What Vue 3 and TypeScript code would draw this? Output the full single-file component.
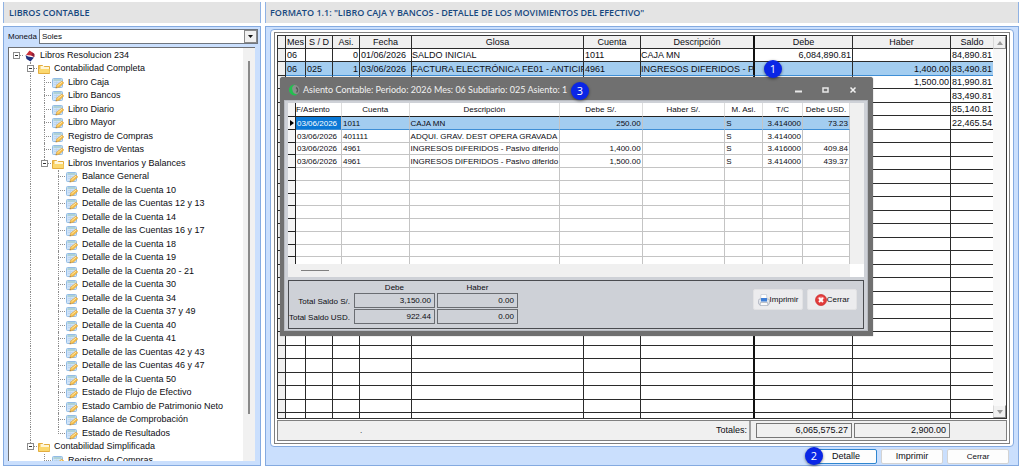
<script setup lang="ts">
import { ref } from 'vue'

type Kind = 'root' | 'folder' | 'leaf'
interface TreeRow {
  level: number
  kind: Kind
  label: string
  last?: boolean
  trunk?: boolean
}

const leaf = (level: number, label: string, last = false): TreeRow => ({ level, kind: 'leaf', label, last, trunk: true })

const tree: TreeRow[] = [
  { level: 0, kind: 'root', label: 'Libros Resolucion 234' },
  { level: 1, kind: 'folder', label: 'Contabilidad Completa' },
  leaf(2, 'Libro Caja'),
  leaf(2, 'Libro Bancos'),
  leaf(2, 'Libro Diario'),
  leaf(2, 'Libro Mayor'),
  leaf(2, 'Registro de Compras'),
  leaf(2, 'Registro de Ventas'),
  { level: 2, kind: 'folder', label: 'Libros Inventarios y Balances', last: true, trunk: true },
  leaf(3, 'Balance General'),
  leaf(3, 'Detalle de la Cuenta 10'),
  leaf(3, 'Detalle de las Cuentas 12 y 13'),
  leaf(3, 'Detalle de la Cuenta 14'),
  leaf(3, 'Detalle de las Cuentas 16 y 17'),
  leaf(3, 'Detalle de la Cuenta 18'),
  leaf(3, 'Detalle de la Cuenta 19'),
  leaf(3, 'Detalle de la Cuenta 20 - 21'),
  leaf(3, 'Detalle de la Cuenta 30'),
  leaf(3, 'Detalle de la Cuenta 34'),
  leaf(3, 'Detalle de la Cuenta 37 y 49'),
  leaf(3, 'Detalle de la Cuenta 40'),
  leaf(3, 'Detalle de la Cuenta 41'),
  leaf(3, 'Detalle de las Cuentas 42 y 43'),
  leaf(3, 'Detalle de las Cuentas 46 y 47'),
  leaf(3, 'Detalle de la Cuenta 50'),
  leaf(3, 'Estado de Flujo de Efectivo'),
  leaf(3, 'Estado Cambio de Patrimonio Neto'),
  leaf(3, 'Balance de Comprobación'),
  leaf(3, 'Estado de Resultados', true),
  { level: 1, kind: 'folder', label: 'Contabilidad Simplificada', last: true },
  { level: 2, kind: 'leaf', label: 'Registro de Compras' },
]

const moneda = ref('Soles')

const bookHeads = ['Mes', 'S / D', 'Asi.', 'Fecha', 'Glosa', 'Cuenta', 'Descripción', 'Debe', 'Haber', 'Saldo']
const bookCols = ['mes', 'sd', 'asi', 'fecha', 'glosa', 'cuenta', 'desc', 'debe', 'haber', 'saldo']
const blank = (n: number) => Array.from({ length: n }, () => '')
const bookRows: string[][] = [
  ['06', '', '0', '01/06/2026', 'SALDO INICIAL', '1011', 'CAJA MN', '6,084,890.81', '', '84,890.81'],
  ['06', '025', '1', '03/06/2026', 'FACTURA ELECTRÓNICA FE01 - ANTICIP', '4961', 'INGRESOS DIFERIDOS - P', '', '1,400.00', '83,490.81'],
  [...blank(8), '1,500.00', '81,990.81'],
  [...blank(9), '83,490.81'],
  [...blank(9), '85,140.81'],
  [...blank(9), '22,465.54'],
  ...Array.from({ length: 22 }, () => blank(10)),
]

const entryHeads = ['F/Asiento', 'Cuenta', 'Descripción', 'Debe S/.', 'Haber S/.', 'M. Asi.', 'T/C', 'Debe USD.']
const entryCols = ['e-fecha', 'e-cuenta', 'e-desc', 'e-debe num', 'e-haber num', 'e-mon', 'e-tc num', 'e-usd num']
const entryRows: string[][] = [
  ['03/06/2026', '1011', 'CAJA MN', '250.00', '', 'S', '3.414000', '73.23'],
  ['03/06/2026', '401111', 'ADQUI. GRAV. DEST OPERA GRAVADA', '', '', 'S', '3.414000', ''],
  ['03/06/2026', '4961', 'INGRESOS DIFERIDOS - Pasivo diferido', '1,400.00', '', 'S', '3.416000', '409.84'],
  ['03/06/2026', '4961', 'INGRESOS DIFERIDOS - Pasivo diferido', '1,500.00', '', 'S', '3.414000', '439.37'],
  ...Array.from({ length: 8 }, () => blank(8)),
]
</script>

<template>
  <div class="app">
    <section class="side">
      <h2 class="bar">LIBROS CONTABLE</h2>
      <div class="panel side-panel">
        <div class="currency">
          <label for="moneda">Moneda</label>
          <div class="combo">
            <select id="moneda" v-model="moneda">
              <option>Soles</option>
            </select>
            <span class="combo-arrow"><svg width="5" height="3" viewBox="0 0 5 3"><path d="M0 0h5L2.500 3z" fill="#111" /></svg></span>
          </div>
        </div>
        <div class="tree-box">
          <ul class="tree">
            <li v-for="(row, i) in tree" :key="i">
              <span v-for="n in row.level" :key="n" class="guide" :class="{ line: n === 2 && row.trunk }"></span>
              <span class="joint" :class="{ last: row.last, first: row.level === 0 }">
                <button v-if="row.kind !== 'leaf'" class="toggle" :aria-label="'Contraer ' + row.label"></button>
              </span>
              <span class="icon">
                <svg v-if="row.kind === 'root'" width="12" height="12" viewBox="0 0 12 12">
                  <path d="M5.500 .5L10 3.500V7L7 5.500 2 5z" fill="#c9303a" />
                  <path d="M8 2.500l2.500 1.500V7L7.500 5.300z" fill="#8e1f3a" />
                  <path d="M1.500 5L4 6.500l6 1L6.500 11.500 2.500 9z" fill="#1d2f7d" />
                </svg>
                <svg v-else-if="row.kind === 'folder'" width="12" height="10" viewBox="0 0 12 10">
                  <path d="M.5 1.500h4l1 1h6v7h-11z" fill="#f2c04a" stroke="#e3ad3e" />
                  <path d="M2.500 2h3l1 1H11v2H2.500z" fill="#fff6d8" />
                  <path d="M1 5h10.500v4H1z" fill="#fbd86f" />
                </svg>
                <svg v-else width="12" height="12" viewBox="0 0 12 12">
                  <rect x=".5" y="1.500" width="10" height="9" rx="1" fill="#cfe3f8" stroke="#93bce6" />
                  <path d="M1.500 2.500h8v1h-8z" fill="#8fc0b4" />
                  <path d="M2 5.500h5M2 7.500h3M4.500 4.500v4" stroke="#b4d0ec" stroke-width=".7" />
                  <path d="M4 11l.7-3L10 4l1.800 2-4.500 4.300z" fill="#f5bd48" stroke="#d99a38" stroke-width=".5" />
                  <path d="M5.500 8.800l4.700-3.800" stroke="#ffe9a8" />
                  <path d="M3.500 11.300l1.200-.3-.6-.8z" fill="#6b4a1e" />
                </svg>
              </span>
              <span class="name">{{ row.label }}</span>
            </li>
          </ul>
          <div class="tree-scroll"><span></span></div>
        </div>
      </div>
    </section>

    <main class="main">
      <h2 class="bar">FORMATO 1.1: "LIBRO CAJA Y BANCOS - DETALLE DE LOS MOVIMIENTOS DEL EFECTIVO"</h2>
      <div class="panel main-panel">
        <div class="card">
          <div class="frame">
            <div class="book">
              <div class="book-view">
                <table class="book-table">
                  <colgroup>
                    <col class="w-mark" />
                    <col v-for="c in bookCols" :key="c" :class="'w-' + c" />
                  </colgroup>
                  <thead>
                    <tr>
                      <th class="mark"></th>
                      <th v-for="(h, i) in bookHeads" :key="h" :class="bookCols[i]">{{ h }}</th>
                    </tr>
                  </thead>
                  <tbody>
                    <tr v-for="(r, i) in bookRows" :key="i" :class="{ selected: i === 1 }">
                      <td class="mark"></td>
                      <td v-for="(c, j) in r" :key="j" :class="bookCols[j]">{{ c }}</td>
                    </tr>
                  </tbody>
                </table>
              </div>
              <div class="book-scroll">
                <button aria-label="Subir"><svg width="6" height="4" viewBox="0 0 6 4"><path d="M0 4h6L3 0z" fill="#999" /></svg></button>
                <button aria-label="Bajar"><svg width="6" height="4" viewBox="0 0 6 4"><path d="M0 0h6L3 4z" fill="#999" /></svg></button>
              </div>
            </div>
            <div class="totals">
              <span class="dot">.</span>
              <span class="totals-label">Totales:</span>
              <output class="sum">6,065,575.27</output>
              <output class="sum">2,900.00</output>
            </div>
          </div>
        </div>
        <div class="actions">
          <button class="action focus">Detalle<span class="badge b2">2</span></button>
          <button class="action">Imprimir</button>
          <button class="action small">Cerrar</button>
        </div>

        <span class="badge b1">1</span>

        <section class="dialog" role="dialog" aria-labelledby="dlg-title">
          <header class="dlg-head">
            <svg width="12" height="12" viewBox="0 0 12 12">
              <circle cx="6.500" cy="6" r="5" fill="#8b8f8d" />
              <path d="M7.500.5A5.500 5.500 0 1 0 9.500 10.500 4.500 4.500 0 0 1 4.500 6 4 4 0 0 1 7.500.5z" fill="#22c04f" />
              <path d="M8 3.500A3 3 0 0 1 8.500 8.500" stroke="#565b59" stroke-width="1.500" fill="none" />
            </svg>
            <h3 id="dlg-title">Asiento Contable: Periodo: 2026 Mes: 06 Subdiario: 025 Asiento: 1</h3>
            <span class="badge b3">3</span>
            <div class="win">
              <button aria-label="Minimizar"><svg width="8" height="8" viewBox="0 0 8 8"><path d="M0 5.500h7" stroke="#e8e8e8" stroke-width="2" /></svg></button>
              <button aria-label="Maximizar"><svg width="8" height="8" viewBox="0 0 8 8"><rect x="1" y="2" width="5" height="4" fill="none" stroke="#e8e8e8" stroke-width="1.500" /></svg></button>
              <button aria-label="Cerrar ventana"><svg width="8" height="8" viewBox="0 0 8 8"><path d="M1.500 1.500l5 5M6.500 1.500l-5 5" stroke="#f2f2f2" stroke-width="1.500" /></svg></button>
            </div>
          </header>
          <div class="dlg-body">
            <div class="entry">
              <div class="entry-view">
                <table class="entry-table">
                  <colgroup>
                    <col class="w-mark" />
                    <col v-for="c in entryCols" :key="c" :class="'w-' + c.split(' ')[0]" />
                  </colgroup>
                  <thead>
                    <tr>
                      <th class="mark"></th>
                      <th v-for="(h, i) in entryHeads" :key="h" :class="entryCols[i].split(' ')[0]">{{ h }}</th>
                    </tr>
                  </thead>
                  <tbody>
                    <tr v-for="(r, i) in entryRows" :key="i" :class="{ selected: i === 0 }">
                      <td class="mark"><svg v-if="i === 0" width="4" height="6" viewBox="0 0 4 6"><path d="M0 0l4 3-4 3z" fill="#000" /></svg></td>
                      <td v-for="(c, j) in r" :key="j" :class="entryCols[j]">{{ c }}</td>
                    </tr>
                  </tbody>
                </table>
                <div class="entry-vscroll"></div>
              </div>
              <div class="entry-hscroll"><span></span></div>
            </div>
            <div class="summary">
              <table class="sum-table">
                <thead>
                  <tr><td></td><th>Debe</th><th>Haber</th></tr>
                </thead>
                <tbody>
                  <tr><th>Total Saldo S/.</th><td><output>3,150.00</output></td><td><output>0.00</output></td></tr>
                  <tr><th>Total Saldo USD.</th><td><output>922.44</output></td><td><output>0.00</output></td></tr>
                </tbody>
              </table>
              <div class="dlg-actions">
                <button>
                  <svg width="12" height="12" viewBox="0 0 12 12">
                    <path d="M3 .5h5.500l.5 5H2.500z" fill="#fff" stroke="#c3cad4" stroke-width=".7" />
                    <rect x=".5" y="5" width="11" height="5.500" rx="1.500" fill="#e2e6ec" stroke="#a3abb8" stroke-width=".7" />
                    <path d="M3 4h6v3.500H3z" fill="#3f7fd6" />
                    <path d="M2.500 8.500h7l.5 3H2z" fill="#fafafa" stroke="#9aa3b0" stroke-width=".6" />
                  </svg>
                  Imprimir
                </button>
                <button>
                  <svg width="12" height="12" viewBox="0 0 12 12">
                    <circle cx="6" cy="6" r="5.500" fill="#e23b3b" stroke="#c92a2a" stroke-width=".7" />
                    <path d="M2 4.500a4.500 3.500 0 0 1 8 0z" fill="#f28080" />
                    <path d="M4 4l4 4M8 4L4 8" stroke="#fff" stroke-width="2" />
                  </svg>
                  Cerrar
                </button>
              </div>
            </div>
          </div>
        </section>
      </div>
    </main>
  </div>
</template>

<style>
body {
  margin: 0;
  background: #fff;
}
</style>

<style scoped>
* {
  box-sizing: border-box;
}
.app {
  display: grid;
  grid-template-columns: 258px minmax(0, 1fr);
  column-gap: 4px;
  height: 100vh;
  padding: 2px 5px 1px 3px;
  overflow: hidden;
  font: 9px/12px "Liberation Sans", Arial, sans-serif;
  color: #0c0c12;
}
button,
select {
  font: inherit;
  color: inherit;
  padding: 0;
  margin: 0;
}
h2,
h3,
ul {
  margin: 0;
  padding: 0;
}
svg {
  display: block;
  flex: none;
}
.side,
.main {
  display: flex;
  flex-direction: column;
  gap: 3px;
  min-width: 0;
  min-height: 0;
}
.bar {
  flex: none;
  height: 21px;
  padding: 0 4px;
  background: #e4e4e4;
  border: solid #8fb2e4;
  border-width: 0 1px;
  font: 600 9px/22px "Open Sans", "Noto Sans", sans-serif;
  color: #17487f;
  white-space: nowrap;
  overflow: hidden;
}
.side .bar {
  padding-left: 5px;
}
.panel {
  flex: 1;
  min-height: 0;
  display: flex;
  flex-direction: column;
  background: #cadffd;
  border: 1px solid #84aae0;
}

/* left panel */
.side-panel {
  padding: 2px 2px 4px 4px;
  gap: 3px;
}
.currency {
  display: flex;
  align-items: center;
  height: 15px;
  flex: none;
}
.currency label {
  width: 31px;
  font-size: 8px;
}
.combo {
  position: relative;
  flex: 1;
  height: 15px;
}
.combo select {
  width: 100%;
  height: 100%;
  appearance: none;
  background: #fff;
  border: 1px solid #6f7680;
  border-radius: 0;
  padding-left: 2px;
  font-size: 8px;
}
.combo-arrow {
  position: absolute;
  right: 1px;
  top: 1px;
  bottom: 1px;
  width: 13px;
  display: flex;
  align-items: center;
  justify-content: center;
  background: #f0f0f0;
  border: 1px solid #8a8a8a;
  pointer-events: none;
}
.tree-box {
  flex: 1;
  min-height: 0;
  display: flex;
  margin-right: 3px;
  background: #fff;
  border: solid #6d6f73;
  border-width: 1px 0 0 1px;
  overflow: hidden;
}
.tree {
  flex: 1;
  min-width: 0;
  padding-top: 1px;
  list-style: none;
  overflow: hidden;
}
.tree li {
  display: flex;
  height: 13px;
  line-height: 13px;
  white-space: nowrap;
}
.tree li:nth-child(even) {
  height: 14px;
}
.guide,
.joint {
  position: relative;
  width: 14px;
  flex: none;
}
.guide.line::before,
.joint::before {
  content: "";
  position: absolute;
  left: 7px;
  top: 0;
  bottom: 0;
  border-left: 1px dotted #8c8c8c;
}
.joint.last::before {
  bottom: 50%;
}
.joint.first::before {
  display: none;
}
.joint::after {
  content: "";
  position: absolute;
  left: 7px;
  right: 0;
  top: 6px;
  border-top: 1px dotted #8c8c8c;
}
.toggle {
  position: absolute;
  z-index: 1;
  left: 4px;
  top: 3px;
  width: 7px;
  height: 7px;
  border: 1px solid #8c8c8c;
  background: linear-gradient(#333, #333) center / 3px 1px no-repeat #fff;
}
.icon {
  width: 14px;
  flex: none;
  display: flex;
  align-items: center;
  justify-content: center;
}
.name {
  padding-left: 3px;
}
.tree-scroll {
  width: 12px;
  background: #f1f1f1;
  padding: 13px 0 47px 5px;
}
.tree-scroll span {
  display: block;
  width: 2px;
  height: 100%;
  background: #8a8a8a;
}

/* ledger */
.main-panel {
  position: relative;
  padding: 2px 4px 0;
}
.card {
  flex: 1;
  min-height: 0;
  display: flex;
  padding: 2px 3px;
  background: #fff;
  border: 1px solid #84aae0;
  border-radius: 4px;
}
.frame {
  flex: 1;
  min-width: 0;
  display: flex;
  flex-direction: column;
  gap: 1px;
  padding: 2px;
  border: 1px solid #808080;
}
.book {
  flex: 1;
  min-height: 0;
  display: flex;
  border: 1px solid #333;
  overflow: hidden;
}
.book-view {
  flex: 1;
  min-width: 0;
  overflow: hidden;
}
table {
  border-collapse: separate;
  border-spacing: 0;
}
.book-table,
.entry-table {
  width: 100%;
  table-layout: fixed;
}
.book-table th,
.book-table td {
  height: 13px;
  padding: 0 1px;
  border: solid #2b2b2b;
  border-width: 0 1px 1px 0;
  line-height: 12px;
  font-weight: normal;
  white-space: nowrap;
  overflow: hidden;
}
.book-table th {
  background: #f0f0f0;
  text-align: center;
  padding: 0;
}
.book-table tbody tr:nth-child(even) td {
  height: 14px;
}
.book-table .mark {
  background: #f0f0f0;
}
.book-table .desc {
  border-right: 2px solid #111;
}
.book-table td.glosa,
.book-table td.desc {
  padding: 0;
}
.book-table th.saldo,
.book-table td.saldo {
  border-right: 0;
}
td.asi,
td.debe,
td.haber,
td.saldo {
  text-align: right;
}
.book-table .selected td:not(.mark) {
  background: #a3cdf0;
  border-bottom-color: #3f8fd6;
}
.w-mark {
  width: 8px;
}
.w-mes {
  width: 20px;
}
.w-sd,
.w-asi {
  width: 27px;
}
.w-fecha {
  width: 52px;
}
.w-cuenta {
  width: 57px;
}
.w-desc {
  width: 114px;
}
.w-debe,
.w-haber {
  width: 98px;
}
.w-saldo {
  width: 42px;
}
.book-scroll {
  width: 13px;
  flex: none;
  display: flex;
  flex-direction: column;
  justify-content: space-between;
  background: #f8f8f8;
}
.book-scroll button {
  width: 13px;
  height: 13px;
  display: flex;
  align-items: center;
  justify-content: center;
  background: #f0f0f0;
  border: 1px solid;
  border-color: #f8f8f8 #8c8c8c #8c8c8c #d8d8d8;
}
.totals {
  flex: none;
  display: flex;
  align-items: center;
  gap: 2px;
  height: 21px;
  padding-right: 56px;
  background: #f0f0f0;
  border: 1px solid #808080;
}
.dot {
  flex: 1;
  padding-left: 82px;
  font-size: 8px;
}
.totals-label {
  height: 19px;
  line-height: 19px;
  padding-right: 2px;
  margin-right: 3px;
  border-right: 2px solid #a0a0a0;
}
.sum {
  width: 96px;
  height: 15px;
  padding-right: 3px;
  border: 1px solid #777;
  line-height: 13px;
  font-size: 9px;
  text-align: right;
}
.actions {
  flex: none;
  display: flex;
  justify-content: flex-end;
  gap: 4px;
  padding: 2px 5px 1px;
}
.action {
  position: relative;
  width: 62px;
  height: 15px;
  line-height: 13px;
  background: #fdfdfd;
  border: 1px solid #d3d3d3;
  border-radius: 2px;
}
.action.focus {
  border-color: #2f86d0;
}
.action.small {
  font-size: 8px;
}
.badge {
  position: absolute;
  z-index: 3;
  width: 18px;
  height: 18px;
  border-radius: 50%;
  background: #0a26e6;
  box-shadow: 0 1px 3px rgba(0, 0, 0, 0.5);
  color: #fff;
  font: 11px/18px "Open Sans", "Noto Sans", sans-serif;
  text-align: center;
}
.b1 {
  left: 498px;
  top: 33px;
}
.b2 {
  left: -11px;
  top: -3px;
}
.b3 {
  left: 291px;
  top: 5px;
}

/* entry dialog */
.dialog {
  position: absolute;
  z-index: 2;
  left: 14px;
  top: 50px;
  width: 593px;
  padding: 0 5px 5px 4px;
  background: #707070;
  border-radius: 3px 3px 0 0;
  box-shadow: 0 0 1px #555;
  font-size: 8px;
}
.dlg-head {
  display: flex;
  align-items: center;
  height: 23px;
  padding: 3px 11px 0 4px;
}
.dlg-head h3 {
  flex: 1;
  padding-left: 3px;
  font: 9px/14px Lato, "Noto Sans", sans-serif;
  color: #f2f2f2;
  white-space: nowrap;
}
.win {
  display: flex;
  gap: 19px;
}
.win button {
  width: 8px;
  height: 8px;
  border: 0;
  background: none;
}
.dlg-body {
  padding: 2px 3px 1px;
  background: #ced1d7;
  border: 1px solid #b9bcc2;
}
.entry {
  background: #fff;
}
.entry-view {
  display: flex;
  height: 161px;
  overflow: hidden;
}
.entry-table {
  width: auto;
  flex: 1;
  min-width: 0;
}
.entry-table th,
.entry-table td {
  height: 13px;
  padding: 0 1px;
  border: solid #c4c4c4;
  border-width: 0 1px 1px 0;
  line-height: 11px;
  font-weight: normal;
  white-space: nowrap;
  overflow: hidden;
}
.entry-table th {
  height: 14px;
  padding: 0;
  border-bottom-color: #222;
  border-right-color: #ddd;
}
.entry-table th.e-fecha {
  text-align: left;
}
.entry-table tbody tr:nth-child(4n + 3) td {
  height: 12px;
}
.entry-table .mark {
  background: #f4f4f4;
  border-color: #222;
}
.entry-table td.mark {
  padding: 0 0 0 2px;
}
.entry-table td.num {
  text-align: right;
}
.entry-table .selected td:not(.mark) {
  background: #a3cdf0;
  border-bottom-color: #3f8fd6;
}
.entry-table .selected td.e-fecha {
  background: #0a78d6;
  color: #fff;
}
.w-e-fecha {
  width: 46px;
}
.w-e-cuenta {
  width: 68px;
}
.w-e-debe,
.w-e-haber {
  width: 83px;
}
.w-e-mon {
  width: 38px;
}
.w-e-tc {
  width: 40px;
}
.w-e-usd {
  width: 47px;
}
.entry-vscroll {
  width: 14px;
  flex: none;
  background: #f0f0f0;
}
.entry-hscroll {
  height: 13px;
  margin-right: 14px;
  padding: 6px 0 0 13px;
  background: #f0f0f0;
}
.entry-hscroll span {
  display: block;
  width: 28px;
  height: 1px;
  background: #808080;
}
.summary {
  display: flex;
  justify-content: space-between;
  align-items: flex-start;
  margin-top: 3px;
  height: 49px;
  border: 1px solid #4a4c50;
}
.sum-table {
  margin-top: 1px;
}
.sum-table th,
.sum-table td {
  padding: 0 0 0 2px;
  font-weight: normal;
  line-height: 11px;
  white-space: nowrap;
}
.sum-table tbody td {
  padding-bottom: 1px;
}
.sum-table tbody th {
  width: 62px;
  padding-right: 2px;
  padding-left: 0;
  text-align: right;
}
.sum-table output {
  display: block;
  width: 81px;
  height: 15px;
  padding-right: 3px;
  border: 1px solid #6a6d72;
  line-height: 13px;
  text-align: right;
}
.dlg-actions {
  display: flex;
  gap: 4px;
  padding: 8px 6px 0 0;
}
.dlg-actions button {
  display: flex;
  align-items: center;
  justify-content: center;
  width: 50px;
  height: 21px;
  background: #ececee;
  border: 1px solid #e2e2e4;
  border-radius: 2px;
}
</style>
